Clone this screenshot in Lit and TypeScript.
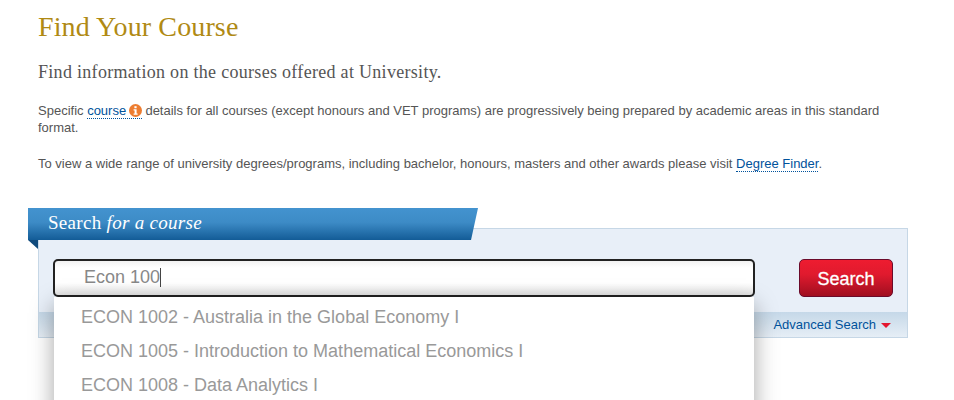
import { LitElement, html, css } from "lit";
import { customElement } from "lit/decorators.js";

@customElement("app-root")
export class AppRoot extends LitElement {
  static styles = css`
    :host { display: block; width: 954px; height: 400px; overflow: hidden; background: #fff; position: relative; font-family: "Liberation Sans", Arial, sans-serif; }
    .page { padding: 12px 46px 0 38px; }
    h1 { margin: 0; font: 400 28px/30px "Liberation Serif", serif; letter-spacing: 0.13px; color: #b08a14; }
    h2 { margin: 19px 0 0; font: 400 18px/22px "Liberation Serif", serif; letter-spacing: 0.3px; color: #555; }
    p { margin: 0; font-size: 13px; line-height: 17px; color: #555; }
    .p1 { margin-top: 19px; width: 860px; }
    .p2 { margin-top: 19px; }
    a { color: #00529b; text-decoration: none; }
    .dotted { border-bottom: 1px dotted #00529b; }
    .info { display: inline-block; width: 13px; height: 13px; vertical-align: -2px; margin-left: -1px; }
    .panel-wrap { position: relative; margin-top: 36px; padding-top: 20px; }
    .tab { position: absolute; left: -10px; top: 0; width: 450px; height: 32px; box-sizing: border-box; padding-left: 20px; background: linear-gradient(#4393cf 0%, #3d8bc6 45%, #135c97 100%); clip-path: polygon(0 0, 100% 0, 443px 100%, 0 100%); color: #fff; font: 400 19px/30px "Liberation Serif", serif; letter-spacing: 0.3px; }
    .tab em { font-style: italic; }
    .fold { position: absolute; left: -10px; top: 32px; width: 10px; height: 9px; background: #0f4a7c; clip-path: polygon(0 0, 100% 0, 100% 100%); }
    .panel { box-sizing: border-box; width: 870px; height: 110px; background: #e8eff8; border: 1px solid #c6d7e6; display: flex; flex-direction: column; }
    .row { display: flex; justify-content: space-between; padding: 30px 14px 0 14px; height: 53px; box-sizing: border-box; flex: none; }
    .input { width: 702px; height: 38px; box-sizing: border-box; border: 2px solid #222; border-radius: 5px; background: linear-gradient(#f2f2f2 0%, #fff 20%, #fff 65%, #e4e4e4 100%); padding: 0 0 2px 29px; font-size: 18px; color: #888; display: flex; align-items: center; }
    .caret { display: inline-block; width: 1px; height: 19px; background: #444; }
    .btn { width: 94px; height: 38px; box-sizing: border-box; border: 1px solid #6b0a2a; border-radius: 5px; background: linear-gradient(#ee1c30 0%, #e01a2e 40%, #a00f20 100%); color: #fff; font-size: 18px; line-height: 38px; text-align: center; -webkit-text-stroke: 0.3px #fff; }
    .foot { margin-top: auto; height: 25px; background: linear-gradient(#c5d8e8, #e6eef6); display: flex; justify-content: flex-end; align-items: center; padding-right: 16px; gap: 5px; font-size: 13px; }
    .caret-down { width: 0; height: 0; border: 5px solid transparent; border-top: 5px solid #e3162f; border-bottom: 0; margin-top: 1px; }
    .menu { position: absolute; left: 54px; top: 297px; width: 700px; height: 140px; background: #fff; box-shadow: 0 8px 22px rgba(0,0,0,0.36); padding: 3px 0 0 27px; box-sizing: border-box; font-size: 18px; color: #999; }
    .menu div { height: 34px; line-height: 34px; white-space: nowrap; }
  `;

  render() {
    return html`
      <div class="page">
        <h1>Find Your Course</h1>
        <h2>Find information on the courses offered at University.</h2>
        <p class="p1">Specific <span class="dotted"><a href="#">course</a> <svg class="info" viewBox="0 0 13 13"><circle cx="6.5" cy="6.5" r="6.5" fill="#ed7d31"/><rect x="5.4" y="2.2" width="2.2" height="2" fill="#fff"/><path d="M4.6 5.3h3v4.2h1v1.2H4.6V9.5h1V6.5h-1z" fill="#fff"/></svg></span> details for all courses (except honours and VET programs) are progressively being prepared by academic areas in this standard format.</p>
        <p class="p2">To view a wide range of university degrees/programs, including bachelor, honours, masters and other awards please visit <a class="dotted" href="#">Degree Finder</a>.</p>
        <div class="panel-wrap">
          <div class="panel">
            <div class="row">
              <div class="input"><span>Econ 100</span><span class="caret"></span></div>
              <div class="btn">Search</div>
            </div>
            <div class="foot"><a href="#">Advanced Search</a><span class="caret-down"></span></div>
          </div>
          <div class="tab">Search <em>for a course</em></div>
          <div class="fold"></div>
        </div>
      </div>
      <div class="menu">
        <div>ECON 1002 - Australia in the Global Economy I</div>
        <div>ECON 1005 - Introduction to Mathematical Economics I</div>
        <div>ECON 1008 - Data Analytics I</div>
      </div>
    `;
  }
}
